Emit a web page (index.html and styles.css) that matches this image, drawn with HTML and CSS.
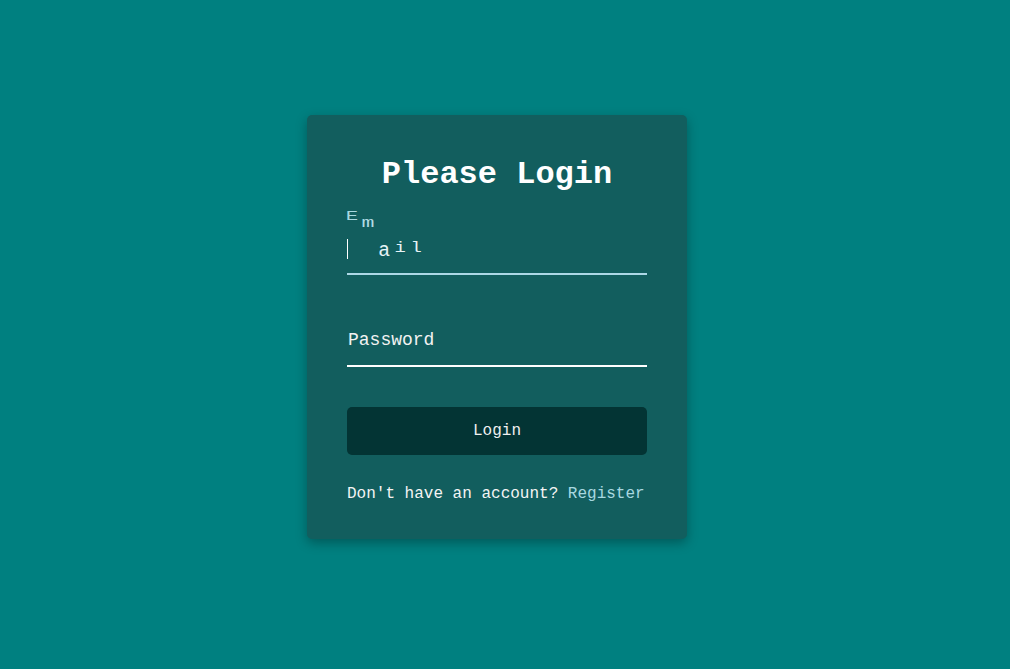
FILE: index.html
```html
<!DOCTYPE html>
<html lang="en">
<head>
<meta charset="utf-8">
<title>Login</title>
<link rel="stylesheet" href="styles.css">
</head>
<body>
<div class="page">
  <div class="container">
    <h1>Please Login</h1>
    <form>
      <div class="form-control email">
        <input type="text" required>
        <span class="caret"></span>
        <label><span class="l1">E</span><span class="l2">m</span><span class="l3">a</span><span class="l4">i</span><span class="l5">l</span></label>
      </div>
      <div class="form-control">
        <input type="password" required>
        <label class="plain">Password</label>
      </div>
      <button class="btn" type="button">Login</button>
      <p class="text">Don't have an account? <a href="#">Register</a></p>
    </form>
  </div>
</div>
</body>
</html>
```
FILE: styles.css
```css
* { box-sizing: border-box; }
html, body { margin: 0; padding: 0; }
body {
  background-color: #008080;
  color: #fff;
  font-family: "Liberation Mono", "Courier New", monospace;
  height: 100vh;
  overflow: hidden;
}
.page {
  width: calc(100% - 16px);
  height: calc(100% - 15px);
  display: flex;
  align-items: center;
  justify-content: center;
}
.container {
  background-color: #125e5e;
  padding: 20px 40px;
  border-radius: 5px;
  box-shadow: 0 4px 12px rgba(0, 0, 0, 0.3);
  width: 380px;
}
.container h1 {
  text-align: center;
  font-size: 32px;
  margin: 21.44px 0 30px;
}
form { margin: 0; }
.form-control {
  position: relative;
  margin: 20px 0 40px;
  width: 300px;
}
.form-control input {
  background-color: transparent;
  border: 0;
  border-bottom: 2px #fff solid;
  display: block;
  width: 100%;
  padding: 15px 0;
  font-size: 18px;
  font-family: inherit;
  color: #fff;
  outline: 0;
}
.email input { border-bottom-color: #add8e6; }
.form-control label {
  position: absolute;
  top: 15px;
  left: 0;
  pointer-events: none;
  font-size: 18px;
  white-space: nowrap;
}
.form-control label.plain { color: #f2f2f2; left: 1px; }
.form-control label span {
  display: inline-block;
  width: 16px;
  font-size: 18px;
  color: #e6f3f6;
}
.caret {
  position: absolute;
  left: 0;
  top: 16px;
  width: 1px;
  height: 20px;
  background: #fff;
}
.email .l1 { color: #a8d8e0; transform: translateY(-32px) scale(1.15, 0.72); }
.email .l2 { color: #b0dbe3; transform: translateY(-25px) scale(1.2, 0.78); }
.email .l3 { transform: translateY(2px) scale(1.1, 1.15); }
.email .l4 { transform: translateY(0) scale(1.05, 0.8); }
.email .l5 { transform: translateY(0) scale(1.05, 0.78); }
.btn {
  display: block;
  width: 100%;
  background: #033434;
  color: #f0f0f0;
  padding: 15px;
  font-family: inherit;
  font-size: 16px;
  border: 0;
  border-radius: 5px;
}
.text {
  margin: 30px 0 16px;
  font-size: 16px;
  color: #f4f4f4;
  white-space: nowrap;
}
.text a {
  text-decoration: none;
  color: #a8d8e0;
}
```
